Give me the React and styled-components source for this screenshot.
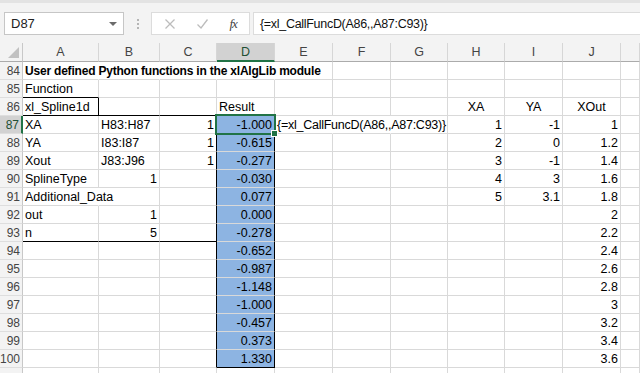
import React from 'react';
import styled, { createGlobalStyle } from 'styled-components';

const GlobalStyle = createGlobalStyle`
  body {
    margin: 0;
    background: #fff;
    font-family: "Liberation Sans", Arial, sans-serif;
    overflow: hidden;
  }
`;

const GRID = '#d9d9d9';
const INK = '#000';
const GREEN = '#217346';

const Window = styled.div`
  width: 640px;
  height: 373px;
  overflow: hidden;
  background: #fff;
`;

const FormulaBar = styled.div`
  display: flex;
  align-items: center;
  height: 43px;
  box-sizing: border-box;
  padding: 9px 0 8px 4px;
  background: #f3f3f3;
  border-top: 3px solid #e3e3e3;
`;

const NameBox = styled.div`
  display: flex;
  align-items: center;
  justify-content: space-between;
  width: 120px;
  height: 23px;
  box-sizing: border-box;
  padding: 0 6px 0 6px;
  background: #fff;
  border: 1px solid #c6c6c6;
  font-size: 13px;
  color: #222;
`;

const Caret = styled.span`
  width: 0;
  height: 0;
  border-left: 4px solid transparent;
  border-right: 4px solid transparent;
  border-top: 4px solid #6b6b6b;
`;

const Grip = styled.div`
  display: flex;
  flex-direction: column;
  align-items: center;
  justify-content: center;
  gap: 2px;
  width: 27px;

  span {
    width: 2px;
    height: 2px;
    background: #b5b5b5;
  }
`;

const IconBox = styled.div`
  display: flex;
  align-items: center;
  justify-content: space-around;
  width: 99px;
  height: 23px;
  box-sizing: border-box;
  padding: 0 2px;
  background: #fff;
  border: 1px solid #dcdcdc;
`;

const Fx = styled.span`
  font-family: "Liberation Serif", serif;
  font-style: italic;
  font-size: 13px;
  color: #444;
  letter-spacing: -1px;
`;

const FormulaInput = styled.div`
  flex: 1;
  display: flex;
  align-items: center;
  height: 23px;
  box-sizing: border-box;
  margin-left: 3px;
  padding-left: 6px;
  background: #fff;
  border: 1px solid #dcdcdc;
  border-right: none;
  font-size: 12.5px;
  letter-spacing: -0.3px;
  color: #111;
`;

const Sheet = styled.div`
  display: grid;
  grid-template-columns: 23px 76px 61px 57px 58px 58px 58px 57px 57px 58px 58px 1fr;
  grid-template-rows: 19px;
  grid-auto-rows: 18px;
`;

const Corner = styled.div`
  position: relative;
  background: #f3f3f3;
  border-right: 1px solid #c8c8c8;
  border-bottom: 1px solid #ababab;

  &::after {
    content: '';
    position: absolute;
    right: 3px;
    bottom: 3px;
    border-left: 11px solid transparent;
    border-bottom: 11px solid #c1c1c1;
  }
`;

const ColHead = styled.div`
  display: flex;
  align-items: center;
  justify-content: center;
  box-sizing: border-box;
  background: ${({ $active }) => ($active ? '#d2d2d2' : '#f3f3f3')};
  border-right: 1px solid #d6d6d6;
  border-bottom: ${({ $active }) => ($active ? `2px solid ${GREEN}` : '1px solid #ababab')};
  font-size: 12.5px;
  color: ${({ $active }) => ($active ? '#1f4f33' : '#444')};
`;

const RowHead = styled.div`
  display: flex;
  align-items: center;
  justify-content: flex-end;
  box-sizing: border-box;
  padding-right: 2px;
  background: ${({ $active }) => ($active ? '#d2d2d2' : '#f3f3f3')};
  border-right: ${({ $active }) => ($active ? `2px solid ${GREEN}` : '1px solid #c8c8c8')};
  border-bottom: 1px solid #dedede;
  font-size: 12px;
  color: ${({ $active }) => ($active ? '#1f4f33' : '#444')};
`;

const Cell = styled.div`
  position: relative;
  display: flex;
  align-items: flex-end;
  justify-content: ${({ $align }) =>
    $align === 'right' ? 'flex-end' : $align === 'center' ? 'center' : 'flex-start'};
  box-sizing: border-box;
  padding: 0 2px 1px 2px;
  background: ${({ $fill }) => $fill || '#fff'};
  border-right: 1px solid ${({ $right, $open }) => ($right ? INK : $open ? 'transparent' : GRID)};
  border-bottom: 1px solid ${({ $bottom }) => ($bottom ? INK : GRID)};
  font-size: ${({ $bold }) => ($bold ? '12px' : '12.5px')};
  font-weight: ${({ $bold }) => ($bold ? 700 : 400)};
  letter-spacing: ${({ $bold, $tight }) => ($bold ? '-0.2px' : $tight ? '-0.25px' : 'normal')};
  color: #000;
  white-space: nowrap;
  z-index: ${({ $layer }) => $layer};
`;

const ActiveFrame = styled.div`
  position: absolute;
  left: -2px;
  top: -2px;
  right: -2px;
  bottom: -2px;
  border: 2px solid ${GREEN};
  pointer-events: none;

  &::after {
    content: '';
    position: absolute;
    right: -4px;
    bottom: -4px;
    width: 5px;
    height: 5px;
    background: ${GREEN};
    border: 1px solid #fff;
  }
`;

const COLS = ['A', 'B', 'C', 'D', 'E', 'F', 'G', 'H', 'I', 'J', 'K'];
const BLUE = '#8db4e2';

const dValues = ['-1.000', '-0.615', '-0.277', '-0.030', '0.077', '0.000', '-0.278',
  '-0.652', '-0.987', '-1.148', '-1.000', '-0.457', '0.373', '1.330'];
const jValues = ['1', '1.2', '1.4', '1.6', '1.8', '2', '2.2', '2.4', '2.6', '2.8', '3', '3.2', '3.4', '3.6'];
const hValues = ['1', '2', '3', '4', '5'];
const iValues = ['-1', '0', '-1', '3', '3.1'];

const cells = {
  A84: { text: 'User defined Python functions in the xlAlgLib module', bold: true },
  A85: { text: 'Function' },
  A86: { text: 'xl_Spline1d' },
  D86: { text: 'Result' },
  H86: { text: 'XA', align: 'center' },
  I86: { text: 'YA', align: 'center' },
  J86: { text: 'XOut', align: 'center' },
  A87: { text: 'XA' }, B87: { text: 'H83:H87' }, C87: { text: '1', align: 'right' },
  A88: { text: 'YA' }, B88: { text: 'I83:I87' }, C88: { text: '1', align: 'right' },
  A89: { text: 'Xout' }, B89: { text: 'J83:J96' }, C89: { text: '1', align: 'right' },
  A90: { text: 'SplineType' }, B90: { text: '1', align: 'right' },
  A91: { text: 'Additional_Data' },
  A92: { text: 'out' }, B92: { text: '1', align: 'right' },
  A93: { text: 'n' }, B93: { text: '5', align: 'right' },
  E87: { text: '{=xl_CallFuncD(A86,,A87:C93)}', tight: true },
};

dValues.forEach((v, i) => { cells[`D${87 + i}`] = { text: v, align: 'right' }; });
jValues.forEach((v, i) => { cells[`J${87 + i}`] = { text: v, align: 'right' }; });
hValues.forEach((v, i) => { cells[`H${87 + i}`] = { text: v, align: 'right' }; });
iValues.forEach((v, i) => { cells[`I${87 + i}`] = { text: v, align: 'right' }; });

// text that runs past its own cell: the origin sits on top, the gridlines it crosses are hidden
const spillOrigins = ['A84', 'A91', 'E87'];
const openCells = ['A84', 'B84', 'C84', 'D84', 'A91', 'E87', 'F87'];

function borderFor(col, row) {
  const right =
    (col === 'A' && row === 86) ||
    (col === 'C' && row >= 87 && row <= 100) ||
    (col === 'D' && row >= 87 && row <= 100);
  const bottom =
    (col === 'A' && row === 85) ||
    (['A', 'B', 'C', 'D'].includes(col) && row === 86) ||
    (['A', 'B', 'C'].includes(col) && row === 93) ||
    (col === 'D' && row === 100);
  return { right, bottom };
}

function layerFor(id) {
  if (id === 'D87') return 4;
  if (spillOrigins.includes(id)) return 3;
  return 1;
}

const ROWS = Array.from({ length: 18 }, (_, i) => 84 + i);

function App() {
  return (
    <Window>
      <GlobalStyle />
      <FormulaBar>
        <NameBox>
          D87
          <Caret />
        </NameBox>
        <Grip>
          <span />
          <span />
          <span />
        </Grip>
        <IconBox>
          <svg width="12" height="12" viewBox="0 0 12 12">
            <path d="M1.5 1.5 L10.5 10.5 M10.5 1.5 L1.5 10.5" stroke="#bcbcbc" strokeWidth="1.3" fill="none" />
          </svg>
          <svg width="13" height="12" viewBox="0 0 13 12">
            <path d="M1.5 6.5 L5 10 L11.5 1.5" stroke="#bcbcbc" strokeWidth="1.3" fill="none" />
          </svg>
          <Fx>fx</Fx>
        </IconBox>
        <FormulaInput>{'{=xl_CallFuncD(A86,,A87:C93)}'}</FormulaInput>
      </FormulaBar>

      <Sheet>
        <Corner />
        {COLS.map((c) => (
          <ColHead key={c} $active={c === 'D'}>
            {c === 'K' ? '' : c}
          </ColHead>
        ))}
        {ROWS.map((r) => (
          <React.Fragment key={r}>
            <RowHead $active={r === 87}>{r <= 100 ? r : ''}</RowHead>
            {COLS.map((c) => {
              const id = `${c}${r}`;
              const cell = cells[id] || {};
              const { right, bottom } = borderFor(c, r);
              return (
                <Cell
                  key={id}
                  $align={cell.align}
                  $bold={cell.bold}
                  $tight={cell.tight}
                  $open={openCells.includes(id)}
                  $layer={layerFor(id)}
                  $right={right}
                  $bottom={bottom}
                  $fill={c === 'D' && r >= 87 && r <= 100 ? BLUE : undefined}
                >
                  {cell.text}
                  {id === 'D87' && <ActiveFrame />}
                </Cell>
              );
            })}
          </React.Fragment>
        ))}
      </Sheet>
    </Window>
  );
}

export default App;
